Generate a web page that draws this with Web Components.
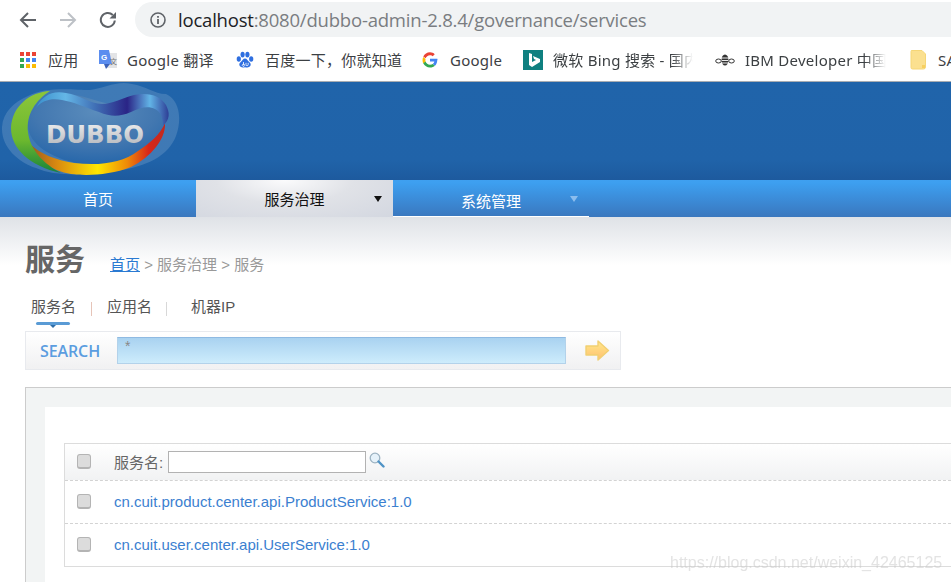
<!DOCTYPE html>
<html lang="zh">
<head>
<meta charset="utf-8">
<title>dubbo admin</title>
<style>
  html, body { margin: 0; height: 582px; overflow: hidden; background: #fff; }
  body { font-family: "Liberation Sans", "Noto Sans CJK SC", sans-serif; }
</style>
</head>
<body>
<browser-toolbar url-host="localhost" url-path=":8080/dubbo-admin-2.8.4/governance/services"></browser-toolbar>
<bookmark-bar>
  <bookmark-item width="98" gap="12" pad="20">
    <svg slot="icon" width="16" height="16" viewBox="0 0 16 16"><rect x="0" y="0" width="4" height="4" fill="#ea4335"/><rect x="6" y="0" width="4" height="4" fill="#ea4335"/><rect x="12" y="0" width="4" height="4" fill="#ea4335"/><rect x="0" y="6" width="4" height="4" fill="#34a853"/><rect x="6" y="6" width="4" height="4" fill="#4285f4"/><rect x="12" y="6" width="4" height="4" fill="#4285f4"/><rect x="0" y="12" width="4" height="4" fill="#34a853"/><rect x="6" y="12" width="4" height="4" fill="#fbbc05"/><rect x="12" y="12" width="4" height="4" fill="#fbbc05"/></svg>
    应用
  </bookmark-item>
  <bookmark-item width="135" gap="9" pad="0">
    <svg slot="icon" width="20" height="20" viewBox="0 0 20 20"><path d="M8 3h11v15H9z" fill="#e3e4e6"/><path d="M1 0h10l3 14H1z" fill="#5b8def"/><path d="M6 14h6l-4 5z" fill="#3c62b8"/><text x="3" y="10" font-size="8" font-weight="700" fill="#fff" font-family="Liberation Sans">G</text><text x="12" y="14" font-size="7" fill="#777" font-family="Noto Sans CJK SC">文</text></svg>
    Google 翻译
  </bookmark-item>
  <bookmark-item width="189" gap="11" pad="3">
    <svg slot="icon" width="18" height="18" viewBox="0 0 18 18" fill="#2f6fe0"><ellipse cx="2.800" cy="8" rx="2.100" ry="2.800"/><ellipse cx="6.600" cy="3.600" rx="2.100" ry="2.900"/><ellipse cx="11.400" cy="3.600" rx="2.100" ry="2.900"/><ellipse cx="15.200" cy="8" rx="2.100" ry="2.800"/><path d="M9 7.500c2 0 2.600 2 4 3.200 1.600 1.300 2 2.400 1.500 3.900-.6 1.600-2.400 2.200-5.500 1.600-3 .6-4.900 0-5.500-1.600-.5-1.500-.1-2.600 1.500-3.900C6.400 9.500 7 7.500 9 7.500z"/><path d="M7.500 11v3.200M7.500 13a1.200 1.200 0 1 0 .01 0M10 11.800v1.800a1.100 1.100 0 0 0 2.200 0v-1.800" stroke="#fff" stroke-width=".8" fill="none"/></svg>
    百度一下，你就知道
  </bookmark-item>
  <bookmark-item width="101" gap="12" pad="0">
    <svg slot="icon" width="16" height="16" viewBox="0 0 48 48"><path fill="#ea4335" d="M24 9.500c3.900 0 6.600 1.700 8.200 3.100l6-5.900C34.500 3.300 29.700 1 24 1 15.100 1 7.500 6.100 3.800 13.500l7 5.400C12.500 13.600 17.800 9.500 24 9.500z"/><path fill="#4285f4" d="M46.600 24.500c0-1.800-.2-3.200-.5-4.600H24v8.400h13c-.3 2.100-1.700 5.200-4.800 7.400l6.800 5.300c4.300-3.900 6.600-9.700 6.600-16.500z"/><path fill="#fbbc05" d="M10.800 28.900c-.4-1.300-.7-2.700-.7-4.100s.3-2.800.7-4.100L3.800 15.300C2.400 18.200 1.600 21.400 1.600 24.800s.8 6.600 2.200 9.500z"/><path fill="#34a853" d="M24 46.500c6 0 11.100-2 14.800-5.400l-6.800-5.300c-1.900 1.300-4.400 2.200-8 2.200-6.200 0-11.500-4.100-13.300-9.800l-7 5.400C7.500 41.400 15.100 46.500 24 46.500z"/></svg>
    Google
  </bookmark-item>
  <bookmark-item width="192" gap="10" pad="0" clip="140">
    <svg slot="icon" width="20" height="20" viewBox="0 0 20 20"><rect width="20" height="20" fill="#0f8080"/><path d="M6 3l3 1v8l4-2-2-1-1-3 7 3v3l-8 5-3-2z" fill="#fff"/></svg>
    微软 Bing 搜索 - 国内
  </bookmark-item>
  <bookmark-item width="195" gap="10" pad="0" clip="141">
    <svg slot="icon" width="20" height="14" viewBox="0 0 20 14"><ellipse cx="10" cy="7" rx="3.500" ry="5.500" fill="#333"/><path d="M6 5h8M6 7.500h8M6 10h8" stroke="#fff" stroke-width=".9"/><g fill="none" stroke="#333" stroke-width="1"><ellipse cx="3.500" cy="8" rx="2.800" ry="2"/><ellipse cx="16.500" cy="8" rx="2.800" ry="2"/></g></svg>
    IBM Developer 中国
  </bookmark-item>
  <bookmark-item width="60" gap="12" pad="0">
    <svg slot="icon" width="16" height="20" viewBox="0 0 16 20"><path d="M2 .5h10l3.500 3.500v13a2 2 0 0 1-2 2h-11a1.500 1.500 0 0 1-1.500-1.500v-16a1.500 1.500 0 0 1 1.500-1.500z" fill="#fbe08f" stroke="#f5d677"/><rect x="12" y="15" width="3" height="3" fill="#f7cf5f"/></svg>
    SA
  </bookmark-item>
</bookmark-bar>
<dubbo-banner></dubbo-banner>
<main-nav>
  <nav-item width="196">首页</nav-item>
  <nav-item width="197" active arrow>服务治理</nav-item>
  <nav-item width="196" arrow underline>系统管理</nav-item>
</main-nav>
<page-head title-text="服务"></page-head>
<filter-tabs></filter-tabs>
<search-bar value="*"></search-bar>
<service-panel>
  <service-row href="#">cn.cuit.product.center.api.ProductService:1.0</service-row>
  <service-row href="#">cn.cuit.user.center.api.UserService:1.0</service-row>
</service-panel>
<water-mark>https://blog.csdn.net/weixin_42465125</water-mark>

<script>
class BrowserToolbar extends HTMLElement {
  connectedCallback() {
    const root = this.attachShadow({ mode: "open" })
    root.innerHTML = `
      <style>
        :host { display: flex; align-items: center; height: 41px; box-sizing: border-box; padding: 2px 0 4px 19px; background: #fff; }
        svg { display: block; flex: none; }
        .back, .fwd { margin-right: 22px; }
        .pill { flex: 1; height: 35px; margin-left: 18px; display: flex; align-items: center; background: #f1f3f4; border-radius: 18px 0 0 18px; padding-left: 15px; font: 18.500px "Open Sans", "Noto Sans", sans-serif; letter-spacing: -0.200px; color: #7a7d81; white-space: nowrap; }
        .host { color: #202124; }
        .info { margin-right: 12px; }
      </style>
      <svg class="back" width="18" height="18" viewBox="0 0 18 18" fill="none" stroke="#5f6368" stroke-width="2"><path d="M17 9H2M9 2L2 9l7 7"/></svg>
      <svg class="fwd" width="18" height="18" viewBox="0 0 18 18" fill="none" stroke="#bdc1c6" stroke-width="2"><path d="M1 9h15M9 2l7 7-7 7"/></svg>
      <svg width="18" height="18" viewBox="0 0 18 18" fill="none"><path d="M15.800 9.500a7 7 0 1 1-2-5.500" stroke="#5f6368" stroke-width="2"/><path d="M17 1v6.500h-6.500z" fill="#5f6368"/></svg>
      <div class="pill">
        <svg class="info" width="16" height="16" viewBox="0 0 16 16" fill="none"><circle cx="8" cy="8" r="7" stroke="#5f6368" stroke-width="1.600"/><path d="M8 7v5M8 4v1.800" stroke="#5f6368" stroke-width="1.800"/></svg>
        <span class="host">${this.getAttribute("url-host")}</span><span>${this.getAttribute("url-path")}</span>
      </div>`
  }
}

class BookmarkBar extends HTMLElement {
  connectedCallback() {
    this.attachShadow({ mode: "open" }).innerHTML = `
      <style>
        :host { display: flex; height: 40px; align-items: center; box-sizing: border-box; background: #fff; overflow: hidden; padding-bottom: 3px; }
      </style>
      <slot></slot>`
  }
}

class BookmarkItem extends HTMLElement {
  connectedCallback() {
    const width = this.getAttribute("width")
    const gap = this.getAttribute("gap")
    const pad = this.getAttribute("pad")
    const clip = this.getAttribute("clip")
    this.attachShadow({ mode: "open" }).innerHTML = `
      <style>
        :host { display: flex; align-items: center; flex: none; width: ${width}px; padding-left: ${pad}px; box-sizing: border-box; gap: ${gap}px; font: 15px "Noto Sans", "Noto Sans CJK SC", sans-serif; letter-spacing: .25px; color: #3c4043; white-space: nowrap; }
        ::slotted(svg) { display: block; flex: none; }
        .t { display: block; overflow: hidden; ${clip ? `width: ${clip}px; -webkit-mask-image: linear-gradient(90deg, #000 85%, transparent);` : ""} }
      </style>
      <slot name="icon"></slot><span class="t"><slot></slot></span>`
  }
}

class DubboBanner extends HTMLElement {
  connectedCallback() {
    this.attachShadow({ mode: "open" }).innerHTML = `
      <style>
        :host { display: block; height: 99px; box-sizing: border-box; border-top: 1px solid #a9adb2; background: linear-gradient(#2064aa, #2063a9 80%, #1d5a9e); }
        svg { display: block; }
      </style>
      <svg width="190" height="98" viewBox="0 0 190 98">
        <defs>
          <linearGradient id="ring" x1="30" x2="165" y1="0" y2="0" gradientUnits="userSpaceOnUse">
            <stop offset="0" stop-color="#9a5a20"/><stop offset=".2" stop-color="#d98a10"/><stop offset=".5" stop-color="#ffe600"/><stop offset=".72" stop-color="#ee8a08"/><stop offset=".88" stop-color="#d8261a"/><stop offset="1" stop-color="#c02a20"/>
          </linearGradient>
          <linearGradient id="green" x1="0" x2="0" y1="0" y2="1">
            <stop offset="0" stop-color="#8cc63a"/><stop offset=".6" stop-color="#6cb82e"/><stop offset="1" stop-color="#18833a"/>
          </linearGradient>
          <linearGradient id="top" x1="36" x2="170" y1="0" y2="0" gradientUnits="userSpaceOnUse">
            <stop offset="0" stop-color="#3a8fcc"/><stop offset=".22" stop-color="#64b6e6"/><stop offset=".45" stop-color="#3f6db4"/><stop offset=".68" stop-color="#2a2486"/><stop offset=".85" stop-color="#62b4e6"/><stop offset="1" stop-color="#2a3690"/>
          </linearGradient>
          <linearGradient id="word" x1="0" x2="0" y1="0" y2="1">
            <stop offset="0" stop-color="#f0f0f0"/><stop offset="1" stop-color="#aeb2b8"/>
          </linearGradient>
          <radialGradient id="core" cx=".5" cy=".25" r=".75">
            <stop offset="0" stop-color="#5a8cbc"/><stop offset=".6" stop-color="#4277b0"/><stop offset="1" stop-color="#2566aa"/>
          </radialGradient>
        </defs>
        <path d="M2 45C3 30 14 20 28 14 45 4 75 8 90 8c14-2 28-10 42-6 14 2 22 10 34 10 14 6 16 26 10 42-8 20-28 30-60 35-34 5-62 5-80-3C18 80 1 65 2 45z" fill="#5d8fc2" opacity=".5"/>
        <path d="M28 40C30 22 45 14 60 12c24-2 44 14 66 10 14-4 28-6 36 8 6 14-2 34-18 44-20 10-50 12-72 6-24-6-46-20-44-40z" fill="url(#core)"/>
        <path d="M30 62c10 10 26 16 44 19 26 3 48 0 64-12 12-8 22-16 27-28 1 16-14 34-34 44-20 8-44 9-60 7-20-3-34-14-41-30z" fill="url(#ring)"/>
        <path d="M50 9C30 10 12 24 11 46c0 20 18 38 50 45C44 82 30 68 28 50c-2-18 8-32 22-41z" fill="url(#green)"/>
        <path d="M36 26C42 14 52 8 66 11c14 2 24 11 36 11 10 0 20-6 32-9 14-3 26 0 32 10 4 8 4 14-3 21 0-8-2-14-8-17-6-3-14-2-24 3-12 5-20 5-32 0C84 25 74 20 62 18c-10-2-20 0-26 8z" fill="url(#top)"/>
        <text x="46" y="61" font-family="DejaVu Sans" font-weight="700" font-size="24" textLength="98" lengthAdjust="spacingAndGlyphs" fill="url(#word)">DUBBO</text>
      </svg>`
  }
}

class MainNav extends HTMLElement {
  connectedCallback() {
    this.attachShadow({ mode: "open" }).innerHTML = `
      <style>
        :host { display: flex; height: 37px; background: linear-gradient(#3fa0f0 0, #3d9ff0 3px, #3a77be 100%); }
      </style>
      <slot></slot>`
  }
}

class NavItem extends HTMLElement {
  connectedCallback() {
    const active = this.hasAttribute("active")
    const arrow = this.hasAttribute("arrow")
    const underline = this.hasAttribute("underline")
    this.attachShadow({ mode: "open" }).innerHTML = `
      <style>
        :host { display: flex; align-items: center; justify-content: center; position: relative; box-sizing: border-box; width: ${this.getAttribute("width")}px; height: 37px; font: 15px "Noto Sans CJK SC", sans-serif; color: ${active ? "#111" : "#fff"}; ${active ? "background: radial-gradient(ellipse at 45% 0, #fbfbfc 0, #e0e2e7 45%, #d3d7e0 100%);" : ""} ${underline ? "border-bottom: 1px solid #fff; padding-top: 4px;" : ""} }
        i { position: absolute; right: 11px; top: 16px; border: 4px solid transparent; border-bottom: 0; border-top: 6px solid ${active ? "#111" : "#8bbdee"}; }
      </style>
      <slot></slot>${arrow ? "<i></i>" : ""}`
  }
}

class PageHead extends HTMLElement {
  connectedCallback() {
    this.attachShadow({ mode: "open" }).innerHTML = `
      <style>
        :host { display: flex; align-items: flex-end; height: 78px; box-sizing: border-box; padding: 0 0 20px 25px; background: linear-gradient(#dfe2e7, #fff 62%); }
        h1 { margin: 0; font: 700 30px/36px "Noto Sans CJK SC", sans-serif; color: #666; }
        p { margin: 0 0 0 25px; font: 15px/20px "Liberation Sans", "Noto Sans CJK SC", sans-serif; color: #999; }
        a { color: #2a7ad2; text-decoration: underline; }
      </style>
      <h1>${this.getAttribute("title-text")}</h1>
      <p><a href="#">首页</a> &gt; 服务治理 &gt; 服务</p>`
  }
}

class FilterTabs extends HTMLElement {
  connectedCallback() {
    this.attachShadow({ mode: "open" }).innerHTML = `
      <style>
        :host { display: flex; height: 36px; box-sizing: border-box; padding: 2px 0 0 31px; font: 15px/20px "Liberation Sans", "Noto Sans CJK SC", sans-serif; color: #555; }
        span { position: relative; display: block; }
        b { display: block; width: 1px; height: 14px; margin: 5px 15px 0 15px; background: #e6c4b8; }
        b.second { margin-left: 14px; background: #d8d8d8; }
        .on::after { content: ""; position: absolute; left: 5px; right: 6px; top: 25px; height: 3px; background: #5a9bd5; border-radius: 2px; }
        .on::before { content: ""; position: absolute; left: 19px; top: 28px; border: 3px solid transparent; border-bottom: 0; border-top-color: #2f6ea8; }
        .ip { margin-left: 9px; }
      </style>
      <span class="on">服务名</span><b></b><span>应用名</span><b class="second"></b><span class="ip">机器IP</span>`
  }
}

class SearchBar extends HTMLElement {
  connectedCallback() {
    this.attachShadow({ mode: "open" }).innerHTML = `
      <style>
        :host { display: flex; align-items: center; width: 596px; height: 39px; box-sizing: border-box; margin-left: 25px; padding-left: 14px; border: 1px solid #e8eaee; background: linear-gradient(#fff, #f1f1f2); }
        .label { width: 77px; font: 600 16px "Open Sans", sans-serif; letter-spacing: -0.100px; color: #5b9de0; }
        .field { width: 449px; height: 27px; box-sizing: border-box; padding: 0 0 0 7px; border: 1px solid #b3d2ea; border-top-color: #8fbae2; background: linear-gradient(#a9d2f0, #cdecfc); font: 14px "Liberation Sans", sans-serif; color: #888; }
        svg { margin-left: 19px; display: block; }
      </style>
      <span class="label">SEARCH</span>
      <div class="field">${this.getAttribute("value")}</div>
      <svg width="25" height="21" viewBox="0 0 25 21">
        <defs><linearGradient id="a" x1="0" x2="0" y1="0" y2="1"><stop offset="0" stop-color="#ffe98a"/><stop offset="1" stop-color="#ffbf70"/></linearGradient></defs>
        <path d="M1 6h12V1l10.500 9.500L13 20v-5H1z" fill="url(#a)" stroke="#f1cf72" stroke-width="1.400" stroke-linejoin="round"/>
      </svg>`
  }
}

class ServicePanel extends HTMLElement {
  connectedCallback() {
    this.attachShadow({ mode: "open" }).innerHTML = `
      <style>
        :host { display: block; margin: 17px 0 0 25px; height: 195px; box-sizing: border-box; padding: 19px 0 0 19px; border: 1px solid #ccc; border-right: 0; border-bottom: 0; background: #f2f4f4; }
        .inner { height: 100%; box-sizing: border-box; padding: 36px 0 0 19px; background: #fff; }
        .table { border: 1px solid #dcdcdc; border-right: 0; font: 15px "Liberation Sans", "Noto Sans CJK SC", sans-serif; }
        .head { display: flex; align-items: center; height: 35px; background: linear-gradient(#fff, #f1f2f3); border-bottom: 1px dashed #d3d3d3; padding: 0 0 1px 12px; color: #666; }
        check-box { margin-right: 23px; }
        input { width: 198px; height: 22px; box-sizing: border-box; margin: 0 3px 0 5px; border: 1px solid #b2b2b2; background: #fff; padding: 0; }
        svg { display: block; margin-top: -3px; }
      </style>
      <div class="inner">
        <div class="table">
          <div class="head">
            <check-box></check-box>
            <span>服务名:</span><input type="text" aria-label="服务名">
            <svg width="16" height="16" viewBox="0 0 16 16" fill="none"><circle cx="6" cy="6" r="4.800" fill="#e6f2fa" stroke="#9db3c2" stroke-width="1.300"/><path d="M9.500 9.500l5 5" stroke="#4f93c6" stroke-width="2.400" stroke-linecap="round"/></svg>
          </div>
          <slot></slot>
        </div>
      </div>`
  }
}

class ServiceRow extends HTMLElement {
  connectedCallback() {
    this.attachShadow({ mode: "open" }).innerHTML = `
      <style>
        :host { display: flex; align-items: center; height: 43px; box-sizing: border-box; padding: 0 0 2px 12px; font: 15px "Liberation Sans", sans-serif; border-bottom: 1px dashed #d3d3d3; }
        :host(:last-child) { border-bottom: 0; height: 42px; }
        check-box { margin-right: 23px; }
        a { color: #3b80d0; text-decoration: none; }
      </style>
      <check-box></check-box><a href="${this.getAttribute("href")}"><slot></slot></a>`
  }
}

class CheckBox extends HTMLElement {
  connectedCallback() {
    this.attachShadow({ mode: "open" }).innerHTML = `
      <style>
        :host { display: block; flex: none; width: 12px; height: 12px; border: 1px solid #b4b4b4; border-bottom-width: 2px; border-radius: 3px; background: #dcdcdc; }
      </style>`
  }
}

class WaterMark extends HTMLElement {
  connectedCallback() {
    this.attachShadow({ mode: "open" }).innerHTML = `
      <style>
        :host { position: absolute; left: 670px; top: 554px; font: 16px "Liberation Sans", sans-serif; color: rgba(200,200,200,.5); filter: blur(.4px); white-space: nowrap; }
      </style>
      <slot></slot>`
  }
}

const elements = { "browser-toolbar": BrowserToolbar, "bookmark-bar": BookmarkBar, "bookmark-item": BookmarkItem, "dubbo-banner": DubboBanner, "main-nav": MainNav, "nav-item": NavItem, "page-head": PageHead, "filter-tabs": FilterTabs, "search-bar": SearchBar, "service-panel": ServicePanel, "service-row": ServiceRow, "check-box": CheckBox, "water-mark": WaterMark }
for (const [name, cls] of Object.entries(elements)) customElements.define(name, cls)
</script>
</body>
</html>
